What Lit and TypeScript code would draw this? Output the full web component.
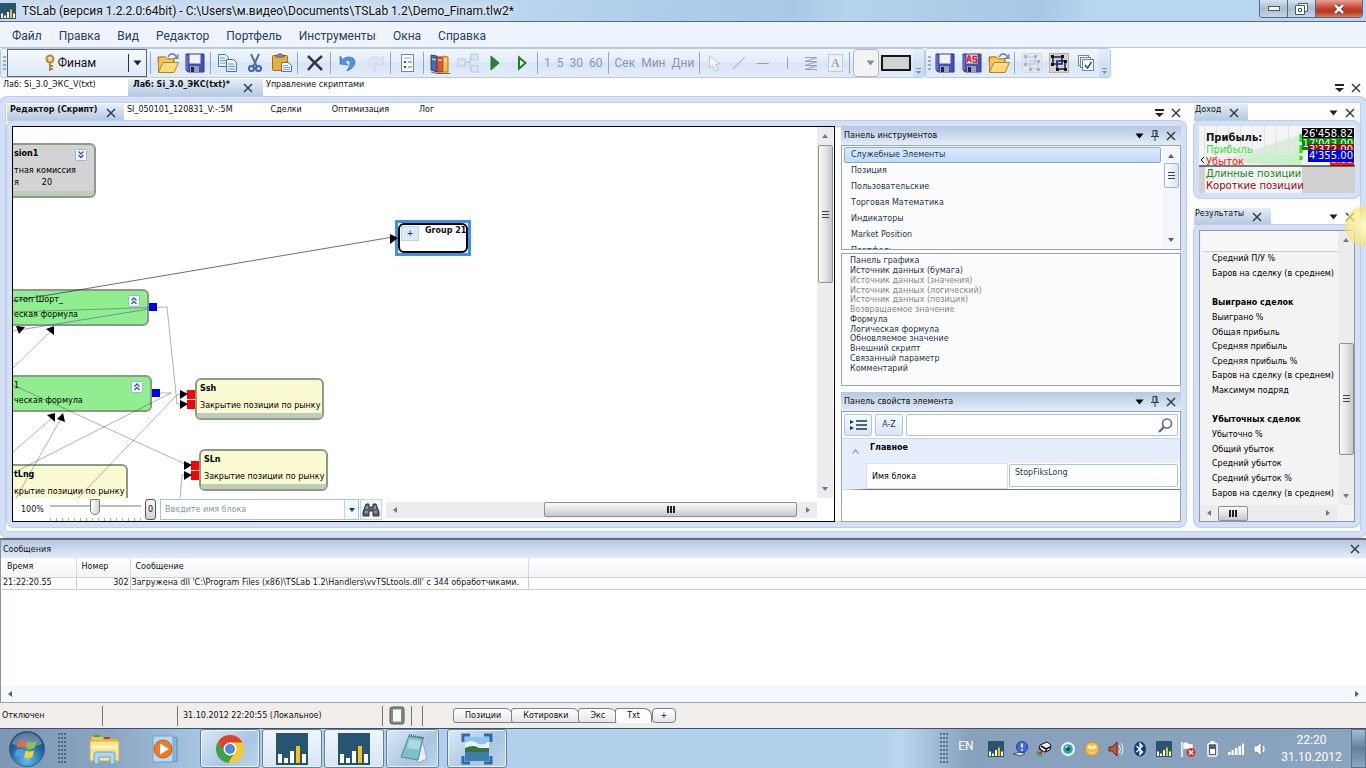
import { LitElement, html, css, svg } from "lit";
import { customElement } from "lit/decorators.js";
import { classMap } from "lit/directives/class-map.js";
import { styleMap } from "lit/directives/style-map.js";

const pic = (w: number, h: number, body: unknown) =>
  html`<svg width=${w} height=${h} viewBox="0 0 ${w} ${h}" aria-hidden="true">${body}</svg>`;

const folder = () => pic(22, 22, svg`
  <path d="M1 5h7l2 2h7v3H1z" fill="#e2a52e" stroke="#a5741d"/>
  <path d="M1.500 20V6l3-1h4l2 2h6v4" fill="#f4c65b" stroke="#b58125"/>
  <path d="M1.500 20.500L6 10.500h15.500L17 20.500z" fill="#fbd873" stroke="#b58125"/>
  <path d="M4 19l3-7h12" fill="none" stroke="#fff0b8"/>
  <path d="M11 5c2-4 6-4 8-1" fill="none" stroke="#6a89b8" stroke-width="1.600"/><path d="M21.500 1.500V7H16z" fill="#6a89b8"/>`);
const disk = (label = false) => pic(20, 20, svg`
  <path d="M1 1h18v18H3l-2-2z" fill="#4850ae" stroke="#33398c"/>
  <rect x="4.500" y="1.500" width="11" height="9" fill=${label ? "#f6d7dc" : "#f1f4ff"}/>
  <rect x="5" y="13" width="9" height="6" fill="#9aa0b4"/><rect x="6" y="14" width="3" height="5" fill="#20244f"/>
  <path d="M2 2v15" stroke="#8087d8"/>
  ${label ? svg`<path d="M5 9l1.500-6h1L9 9M5.500 7h3M15 3.500h-4v2.500h3.500V9H10.500" fill="none" stroke="#d32030" stroke-width="1.500"/>` : ""}`);
const key = () => pic(12, 18, svg`<circle cx="6" cy="5" r="3.500" fill="#f3cf86" stroke="#b8873a" stroke-width="2"/><path d="M6 9v8M6 12h3M6 15h3" stroke="#b8873a" stroke-width="2"/><circle cx="6" cy="4" r="1" fill="#fff"/>`);
const copy = () => pic(21, 20, svg`<g fill="#eaf3ff" stroke="#4c72b0"><path d="M1.500 1.500h7l3 3v9h-10z"/><path d="M9.500 6.500h7l3 3v9h-10z"/></g><path d="M3 5h5M3 7.500h6M3 10h6M11 11h6M11 13.500h7M11 16h7" stroke="#6f94cc"/>`);
const cut = () => pic(14, 20, svg`<path d="M3 1l5.500 12M11 1L5.500 13" stroke="#5a6f92" stroke-width="2"/><circle cx="3.500" cy="15.500" r="2.500" fill="none" stroke="#3c62b8" stroke-width="2"/><circle cx="10.500" cy="15.500" r="2.500" fill="none" stroke="#3c62b8" stroke-width="2"/>`);
const paste = () => pic(22, 20, svg`<rect x="1.500" y="2.500" width="15" height="15" rx="1" fill="#e9b13c" stroke="#a56d1a"/><path d="M5 4V2h2.500c0-2 3-2 3 0H13v2z" fill="#8a93a5" stroke="#59606e"/><path d="M10.500 9.500h7l3 3v6h-10z" fill="#f3f7fd" stroke="#5f6f88"/><path d="M12 12.500h5M12 14.500h7M12 16.500h7" stroke="#8ea3c1"/>`);
const cross = () => pic(18, 18, svg`<path d="M2 2c4 4 8 8 14 14M16 2C11 6 6 11 2 16" fill="none" stroke="#2e3742" stroke-width="2.500"/>`);
const undo = () => pic(18, 17, svg`<path d="M1 1v8l8 1-2.500-3C9 4 13 6 10 12l-2 4C16 13 18 6 14 3 10 1 6 2 4 4.500z" fill="#5590e0" stroke="#2e64b4" stroke-width=".6"/>`);
const redo = () => pic(18, 17, svg`<path d="M17 1v8l-8 1 2.500-3C9 4 5 6 8 12l2 4C2 13 0 6 4 3c4-2 8-1 10 1.500z" fill="#dde7f4" stroke="#bfcfe5" stroke-width=".7"/>`);
const sheet = () => pic(15, 20, svg`<rect x="1.500" y="1.500" width="12" height="17" fill="#fafcff" stroke="#7b8899"/><path d="M4 5h7" stroke="#9aa7b8"/><path d="M4 8h2v2H4zM4 13h2v2H4z" fill="#404b5c"/><path d="M8 9h4M8 14h4" stroke="#5f6c80"/>`);
const books = () => pic(23, 21, svg`<path d="M2 2l6 1v16l-6-2z" fill="#4470b0" stroke="#27467e"/><path d="M8 4h6v15H8z" fill="#e0503c" stroke="#942c20"/><path d="M14 3l5 1v15h-5z" fill="#f3c14c" stroke="#a97a1b"/><path d="M3 6l4 1M9 7h4M15 7h3" stroke="#fff"/><path d="M2 19l6 1.500h13" stroke="#8a5e28" fill="none"/>`);
const tree = () => pic(22, 20, svg`<g fill="#dde7f4" stroke="#b7c8df"><path d="M7 9h6V4h2M7 9h6v7h2" fill="none"/><rect x="1" y="6" width="7" height="7"/><rect x="14" y="1" width="7" height="6"/><rect x="14" y="13" width="7" height="6"/></g>`);
const play = (solid: boolean) => pic(10, 16, svg`<path d=${solid ? "M1 1v14l8-7z" : "M2 2.500v11L8.500 8z"} fill=${solid ? "#1f8a2a" : "#f2faf2"} stroke="#217a2a" stroke-width=${solid ? 1 : 2}/>`);
const cursor = () => pic(14, 18, svg`<path d="M1.500 1.500v12.500l3-3 2.500 6 3-1-2.500-6H12z" fill="#f4f6fa" stroke="#bcc5d2"/>`);
const stroke = (d: string) => pic(14, 14, svg`<path d=${d} fill="none" stroke="#96a0ae"/>`);
const fib = () => pic(14, 16, svg`<path d="M1 2.500h12M1 6.500h12M1 10.500h12M1 14.500h12M13 2.500L1 6.500M13 6.500L1 10.500M13 10.500L1 14.500" stroke="#96a0ae" fill="none"/>`);
const letterBox = () => html`<span class="letter">A</span>`;
const groupIcon = (on: boolean) => pic(20, 20, svg`
  <rect x=".5" y=".5" width="19" height="19" fill=${on ? "#d5d2cb" : "#e4e9f0"} stroke=${on ? "#b5b2aa" : "#d2dae5"}/>
  <g fill="none" stroke=${on ? "#141a6a" : "#b9c3d3"} stroke-width=${on ? 1.5 : 1}><rect x="4" y="4" width="9" height="7"/><rect x="8" y="8" width="8" height="8"/></g>
  <path d="M2 2h3v3H2zM12 2h3v3h-3zM2 10h3v3H2zM7 15h3v3H7zM15 15h3v3h-3zM15 7h3v3h-3z" fill=${on ? "#101010" : "#aab4c3"}/>`);
const checks = () => pic(18, 18, svg`<g fill="#f8fbff" stroke="#6c84a8"><rect x="1.500" y="1.500" width="10" height="10"/><rect x="3.500" y="3.500" width="10" height="10"/><rect x="5.500" y="5.500" width="11" height="11"/></g><path d="M8 11l2.500 3 4-6" fill="none" stroke="#2a4f8c" stroke-width="1.500"/>`);

const xMark = (s = 10) => pic(s, s, svg`<path d="M1 1L${s - 1} ${s - 1}M${s - 1} 1L1 ${s - 1}" stroke="#333c48" stroke-width="1.500"/>`);
const caretDown = (c = "#222") => pic(9, 6, svg`<path d="M.5 .5h8L4.500 5.500z" fill=${c}/>`);
const overflowMark = () => pic(9, 8, svg`<path d="M0 1h9" stroke="#222" stroke-width="2"/><path d="M0 4h9L4.500 8z" fill="#222"/>`);
const pin = () => pic(8, 11, svg`<path d="M2 .5h4v6H2zM0 6.500h8M4 7v4" fill="none" stroke="#2b3848"/><path d="M5 1v6" stroke="#2b3848"/>`);
const arrow = (dir: "up" | "down" | "left" | "right", c = "#6e7785") => {
  const d = { up: "M1 6l3-4 3 4z", down: "M1 2h6L4 6z", left: "M6 1v6L2 4z", right: "M2 1v6l4-3z" }[dir];
  return pic(8, 8, svg`<path d=${d} fill=${c}/>`);
};
const chev = (down: boolean) => pic(12, 12, svg`<rect x=".5" y=".5" width="11" height="11" rx="1" fill="#f4f8ff" stroke="#9fb4d0"/>
  <path d=${down ? "M3.500 2.500L6 5l2.500-2.500M3.500 6L6 8.500 8.500 6" : "M3.500 5.500L6 3l2.500 2.500M3.500 9L6 6.500 8.500 9"} fill="none" stroke="#3b568c" stroke-width="1.300"/>`);
const binoculars = () => pic(18, 16, svg`<path d="M4 2h3v3h4V2h3l3 8v4h-6V9H7v5H1v-4z" fill="#5b6068" stroke="#34383f"/><path d="M3 10h3M12 10h3M5 4v3M13 4v3" stroke="#c8ccd2"/>`);
const lens = () => pic(15, 15, svg`<circle cx="9" cy="5.500" r="4.500" fill="#fff" stroke="#5d6f86" stroke-width="1.600"/><path d="M6 9l-5 5" stroke="#5d6f86" stroke-width="2.400"/>`);
const listMark = () => pic(18, 12, svg`<path d="M1 1l4 2-4 2zM1 7l4 2-4 2z" fill="#26344a"/><path d="M7 2h11M7 6h11M7 10h11" stroke="#26344a" stroke-width="1.300"/>`);

const tslab = (s: number) => html`<svg width=${s} height=${s} viewBox="0 0 32 32" aria-hidden="true">
  <rect width="32" height="32" fill="#27546f"/><path d="M2 21h4v9H2zM8 25h4v5H8zM14 18h4v12h-4zM26 21h4v9h-4z" fill="#fff"/><path d="M20 13h4v17h-4z" fill="#f4c21c"/></svg>`;

const big = (body: unknown) => html`<svg width="32" height="32" viewBox="0 0 32 32" aria-hidden="true">${body}</svg>`;
const explorer = () => big(svg`<path d="M2 3h11l2 3h14v21H2z" fill="#e9c65d" stroke="#c39c37"/><path d="M5 2h6v2H5z" fill="#37a43c"/><path d="M15 4h6v2h-6z" fill="#c53b2c"/><path d="M1 8h29v20H1z" fill="#f9e48f" stroke="#d1ae4c"/><path d="M2 14h27" stroke="#fff3b9" stroke-width="3"/><path d="M5 31V21q0-2 2-2h17q2 0 2 2v10h-5v-7H10v7z" fill="#a8d7f2" stroke="#5fa3cb"/>`);
const media = () => big(svg`<path d="M14 3l13 2v23l-13 1z" fill="#86b9df" stroke="#5289b9"/><path d="M3 3h20v26H3z" fill="#b7daf2" stroke="#6ba4cf"/><circle cx="13" cy="16" r="9" fill="#ee7b22" stroke="#cf5c10"/><path d="M10 10.500v11l9-5.500z" fill="#fff"/>`);
const chrome = () => big(svg`<circle cx="16" cy="16" r="14" fill="#f6cb2d"/><path d="M4 9A14 14 0 0 1 28.500 9.500H16L9.500 19z" fill="#dd4132"/><path d="M3.800 9A14 14 0 0 0 14 29.900L20.500 20 10 18z" fill="#3fa14b"/><circle cx="16" cy="16" r="6.500" fill="#fff"/><circle cx="16" cy="16" r="5" fill="#4a8ad6"/>`);
const notepad = () => big(svg`<path d="M25 6l5 20-9 4-2-5z" fill="#e8edf1" stroke="#99a5ae"/><path d="M12 3l14 2-5 22-17-3z" fill="#7fc0c9" stroke="#4d8a94"/><path d="M12 6l12 2-2 9-12-2z" fill="#a9dae0"/><path d="M12 2l15 3" stroke="#566" stroke-width="2" stroke-dasharray="1 1"/>`);
const photo = () => big(svg`<rect x="4" y="4" width="24" height="24" fill="#8cc3ef"/><path d="M4 10q7-4 12 0t12-2v8H4z" fill="#e6f2fb"/><path d="M4 15q9-4 14 0h10v4H4z" fill="#3f7039"/><path d="M4 19h24v9H4z" fill="#3c7fae"/><path d="M2 9V2h7M23 2h7v7M30 23v7h-7M9 30H2v-7" fill="none" stroke="#2b6ab0" stroke-width="3"/>`);
const orb = () => html`<svg width="38" height="38" viewBox="0 0 38 38" aria-hidden="true">
  <defs><radialGradient id="orb" cx=".5" cy=".8" r=".8"><stop offset="0" stop-color="#5fc3ee"/><stop offset=".6" stop-color="#23669f"/><stop offset="1" stop-color="#16385f"/></radialGradient></defs>
  <circle cx="19" cy="19" r="17.500" fill="url(#orb)" stroke="#3e5d7c"/><path d="M4 14A15.500 15.500 0 0 1 34 14Q19 20 4 14z" fill="#fff" opacity=".3"/>
  <path d="M10 12q4-3 8-1l-1.500 7q-4-2-8 0z" fill="#ec6a36"/><path d="M19.500 11.500q4 2 9 0L26.500 18q-4 2-8.500.5z" fill="#8cc63e"/>
  <path d="M8 20q4-2 8 0l-1.500 7q-4-2-8 0z" fill="#47a0e2"/><path d="M17.500 20.500q4 2 8.500 0L24.500 27q-4 2-8.500.5z" fill="#f8cd3b"/></svg>`;

const tray = [
  { n: "TSLab", i: () => tslab(16) },
  { n: "Сообщение", i: () => pic(16, 16, svg`<path d="M1 13l6-2 6 1-4 3z" fill="#d8dde4" stroke="#46526a"/><circle cx="10" cy="6" r="5.500" fill="#3e6ce0" stroke="#1c3c9a"/><path d="M10 2.500v4M10 8v1.500" stroke="#fff" stroke-width="1.800"/>`) },
  { n: "Устройство", i: () => pic(16, 16, svg`<path d="M4 4l7-3 4 3-1 5-5 2-6-3z" fill="#f3f3f3" stroke="#111"/><path d="M5 5l5 3v3M10 8l4-2" stroke="#111" fill="none" stroke-width="1.500"/><path d="M4 7l2 4-5 3" stroke="#111" fill="none"/><path d="M1 11l5 2" stroke="#e23b3b" stroke-width="2"/><path d="M1 13l5 2" stroke="#36b54a" stroke-width="2"/>`) },
  { n: "Агент", i: () => pic(16, 16, svg`<circle cx="8" cy="8" r="7.500" fill="#e6f4f6" stroke="#8ca4ae"/><circle cx="8" cy="8" r="4.800" fill="#2aa3b8"/><circle cx="8" cy="8" r="2" fill="#0d4c62"/><circle cx="6.500" cy="6" r="1" fill="#fff"/>`) },
  { n: "Монета", i: () => pic(16, 16, svg`<circle cx="8" cy="8" r="7" fill="#f3b945" stroke="#d08c22"/><path d="M3 6q4-4 5 0 3-4 5 0-2 3-5 2-3 1-5-2z" fill="#fff0bf"/><path d="M5 11q3 2 6 0" stroke="#fff0bf" fill="none"/>`) },
  { n: "Динамик", i: () => pic(16, 16, svg`<path d="M1 6h3l5-5v14l-5-5H1z" fill="#c4553c" stroke="#6e2517"/><path d="M11 4q3 4 0 8M13 2q4 6 0 12" fill="none" stroke="#e9eef4"/>`) },
  { n: "Bluetooth", i: () => pic(16, 16, svg`<ellipse cx="8" cy="8" rx="6" ry="7.500" fill="#123e78"/><path d="M4.500 5l6 6L8 13.500v-11L10.500 5l-6 6" fill="none" stroke="#fff" stroke-width="1.300"/>`) },
  { n: "TSLab 2", i: () => tslab(16) },
  { n: "Центр поддержки", i: () => pic(16, 16, svg`<path d="M2 1v15" stroke="#fff" stroke-width="1.500"/><path d="M3 2q3-2 5 0t5 0v7q-3 2-5 0T3 9z" fill="#fff" stroke="#75808e" stroke-width=".5"/><circle cx="11" cy="11.500" r="4.500" fill="#d8362c"/><path d="M9 9.500l4 4M13 9.500l-4 4" stroke="#fff" stroke-width="1.500"/>`) },
  { n: "Батарея", i: () => pic(16, 16, svg`<rect x="4" y="2.500" width="9" height="12.500" rx="1.500" fill="#51606f" stroke="#fff" stroke-width="1.500"/><path d="M6.500 1h4" stroke="#fff" stroke-width="2"/><path d="M6 8h5v5H6z" fill="#fff"/>`) },
  { n: "Сеть", i: () => pic(16, 16, svg`<path d="M0 11h2.500v3H0zM3.500 9H6v5H3.500zM7 7h2.500v7H7zM10.500 5H13v9h-2.500zM14 2.500h2V14h-2z" fill="#fff"/>`) },
  { n: "Громкость", i: () => pic(16, 16, svg`<path d="M2 5h3l4-4v14l-4-4H2z" fill="#fff" stroke="#5d6b7a" stroke-width=".6"/><path d="M11 5q2 3 0 6" fill="none" stroke="#fff" stroke-width="1.300"/>`) },
];

const categories = ["Служебные Элементы", "Позиция", "Пользовательские", "Торговая Математика", "Индикаторы", "Market Position", "Портфель"];
const elements: [string, boolean][] = [
  ["Панель графика", true], ["Источник данных (бумага)", true], ["Источник данных (значения)", false],
  ["Источник данных (логический)", false], ["Источник данных (позиция)", false], ["Возвращаемое значение", false],
  ["Формула", true], ["Логическая формула", true], ["Обновляемое значение", true], ["Внешний скрипт", true],
  ["Связанный параметр", true], ["Комментарий", true],
];
const results = ["Средний П/У %", "Баров на сделку (в среднем)", "", "#Выиграно сделок", "Выиграно %", "Общая прибыль",
  "Средняя прибыль", "Средняя прибыль %", "Баров на сделку (в среднем)", "Максимум подряд", "", "#Убыточных сделок",
  "Убыточно %", "Общий убыток", "Средний убыток", "Средний убыток %", "Баров на сделку (в среднем)"];

interface Block { kind: string; x: number; y: number; w: number; h: number; title: string; text: string; icon?: string; cut?: boolean; extra?: [string, string]; plain?: boolean; }
const blocks: Block[] = [
  { kind: "grey", x: -8, y: 16, w: 91, h: 55, title: "sion1", text: "тная комиссия", extra: ["я", "20"], icon: "down", cut: true },
  { kind: "green", x: -8, y: 162, w: 144, h: 37, title: "стоп Шорт_", text: "еская формула", icon: "up", cut: true, plain: true },
  { kind: "green", x: -8, y: 248, w: 147, h: 37, title: "1", text: "ческая формула", icon: "up", cut: true, plain: true },
  { kind: "yellow", x: -8, y: 337, w: 123, h: 42, title: "tLng", text: "крытие позиции по рынку", cut: true },
  { kind: "yellow", x: 182, y: 251, w: 129, h: 42, title: "Ssh", text: "Закрытие позиции по рынку" },
  { kind: "yellow", x: 186, y: 322, w: 129, h: 42, title: "SLn", text: "Закрытие позиции по рынку" },
];

@customElement("app-root")
export class AppRoot extends LitElement {
  static styles = css`
    :host { display: block; font: 8px/10px "DejaVu Sans", sans-serif; color: #111; background: #fff; }
    * { box-sizing: border-box; }
    button, input, select { font: inherit; color: inherit; margin: 0; }
    button { border: 0; padding: 0; background: none; display: inline-flex; align-items: center; justify-content: center; flex: none; white-space: nowrap; }
    svg { display: block; flex: none; }
    .app { display: flex; flex-direction: column; height: 100vh; min-height: 600px; overflow: hidden; }
    .ui { font-family: Roboto, "Noto Sans", sans-serif; font-size: 12px; line-height: 16px; }

    .title { flex: none; height: 22px; display: flex; align-items: center; border-bottom: 1px solid #566b84;
      background: linear-gradient(100deg, #c5daee 0 30%, #b2d0ec 45%, #a9c8e6 58%, #b6d3ed 62%, #a8c7e5 76%, #b9d6f0 80% 100%); }
    .title .name { flex: 1; padding-left: 6px; color: #111; text-shadow: 0 0 6px #fff, 0 0 8px #fff; font-weight: 400; margin: 0; white-space: nowrap; }
    .winbtns { display: flex; align-self: flex-start; height: 18px; margin-right: 3px; border: 1px solid #586a80; border-top: 0; border-radius: 0 0 4px 4px; overflow: hidden; }
    .winbtns button { width: 28px; background: linear-gradient(#d7e3ef, #a9bdd2 50%, #c3d5e7); border-right: 1px solid #586a80; }
    .winbtns .close { width: 46px; border: 0; background: linear-gradient(#e7a294, #c8402a 50%, #b63820 70%, #de7b5c); }

    .menu { flex: none; height: 26px; display: flex; gap: 17px; align-items: center; padding: 0 12px; background: #eff3fb; border-bottom: 1px solid #b8c9df; color: #24405e; }
    .menu button { height: 20px; padding-top: 2px; }

    .bars { flex: none; display: flex; height: 30px; }
    .bar { display: flex; align-items: center; height: 30px; border: 1px solid #b6cbe6; border-radius: 3px; background: linear-gradient(#f2f7fd, #e3ecf8 45%, #d9e5f5 50%, #e4edf9); padding-left: 2px; }
    .bar button { width: 27px; height: 26px; }
    .bar .narrow { width: 24px; }
    .sep { flex: none; width: 1px; height: 22px; margin: 0 3px 0 2px; background: #98a8bc; }
    .grip { flex: none; width: 3px; height: 14px; background: repeating-linear-gradient(#9aabc2 0 2px, transparent 2px 4px); }
    .bar .account { display: flex; width: 140px; height: 28px; border: 1px solid #5d6570; color: #111; margin: 0 1px; background: linear-gradient(#f5f9fe, #dfe9f6); }
    .account .face { flex: 1; display: flex; align-items: center; justify-content: center; gap: 2px; padding-left: 4px; }
    .account .drop { width: 18px; height: 18px; border-left: 1px solid #333; align-self: center; display: flex; align-items: center; justify-content: center; }
    .bar .txt { width: auto; padding: 0 3px; color: #8b97a8; }
    .bar .ddl { width: 26px; height: 28px; border: 1px solid #b3b8c0; border-radius: 4px; background: #f3f3f3; padding-left: 8px; }
    .bar .swatch { width: 30px; height: 16px; border: 2px solid #14161a; background: #d2d2d2; margin: 0 2px; }
    .bar .over { width: 11px; height: 28px; background: linear-gradient(#e2edfa, #c3d8f1); align-items: flex-end; padding-bottom: 3px; opacity: .8; }
    .letter { font: bold 12px/16px "Liberation Serif", serif; border: 1px solid #c2cad6; width: 15px; color: #9ba4b2; background: #edf1f6; }

    .tabs { flex: none; display: flex; align-items: flex-start; height: 19px; padding-top: 1px; }
    .tabs.inner { padding-top: 2px; }
    .tab { height: 100%; align-items: flex-start; justify-content: flex-start; padding: 1px 3px 0; }
    .tab.on { background: linear-gradient(#e4edf7, #b3c9e0); gap: 9px; font-weight: 700; }
    .tab.on svg { margin-top: 3px; }
    .tab.wide { padding-left: 15px; padding-right: 15px; }
    .tab.lead { padding-right: 23px; }
    .tab.doc { min-width: 128px; }
    .tab.doc.on { min-width: 135px; padding-left: 5px; gap: 13px; }
    .tab.first { min-width: 117px; }
    .tab.slim { font-weight: 400; gap: 8px; padding-left: 1px; padding-right: 9px; }
    .tabs .fill { flex: 1; }
    .tools { display: flex; gap: 7px; align-items: center; align-self: center; padding-right: 5px; }

    .frame { border: 5px solid #d3e0f6; border-radius: 7px; box-shadow: inset 0 0 0 1px #c0d0ea, 0 0 0 1px #bccde8; background: #fff; min-width: 0; min-height: 0; }
    .outer { flex: 1 1 0; display: flex; gap: 8px; padding: 0 1px 5px 2px; }
    .work { flex: 1; min-width: 0; display: flex; flex-direction: column; }
    .work > .frame { flex: 1; display: flex; gap: 6px; }
    .right { flex: none; width: 166px; display: flex; flex-direction: column; }

    .editor { flex: 1; min-width: 0; border: 1px solid #000; display: flex; flex-direction: column; }
    .stage { flex: 1; min-height: 0; display: flex; }
    .canvas { flex: 1; position: relative; overflow: hidden; }
    .wires { position: absolute; inset: 0; pointer-events: none; }
    .block { position: absolute; border: 2px solid #8b9c84; border-radius: 6px; overflow: hidden; white-space: nowrap; padding: 4px 3px 0; color: #000; }
    .block.cut { padding-left: 7px; }
    .block h3 { margin: 0 0 7px; font-size: 8px; line-height: 10px; height: 10px; }
    .block.plain h3 { font-weight: 400; margin-bottom: 5px; }
    .block p { margin: 0 0 2px; display: flex; gap: 23px; }
    .grey { background: #d3d3d3; } .green { background: #90ee90; } .yellow { background: #fafad2; }
    .grey::after, .yellow::after { content: ""; position: absolute; left: 0; right: 0; bottom: 0; height: 5px; background: #c1cbbd; }
    .block .exp { position: absolute; right: 7px; top: 4px; }
    .group { position: absolute; left: 382px; top: 93px; width: 76px; height: 36px; border: 3px solid #3c92e8; background: #fff; }
    .group .in { height: 100%; border: 2px solid #000; border-radius: 6px; display: flex; gap: 6px; padding: 1px; overflow: hidden; font-weight: 700; white-space: nowrap; }
    .group button { width: 18px; height: 15px; background: #dce9f8; border: 1px solid #c0d2e8; font-weight: 400; }

    .sb { flex: none; background: #ececee; display: flex; align-items: center; justify-content: space-between; }
    .sb.v { width: 16px; flex-direction: column; padding: 5px 0; }
    .sb.h { height: 16px; padding: 0 5px; }
    .thumb { border: 1px solid #8e9196; border-radius: 2px; display: flex; align-items: center; justify-content: center; }
    .v .thumb { width: 15px; background: linear-gradient(90deg, #fafafa, #e2e3e6 50%, #c5c7cb); }
    .h .thumb { height: 15px; background: linear-gradient(#fafafa, #e2e3e6 50%, #c5c7cb); }
    .v .thumb::after { content: ""; width: 7px; height: 7px; background: repeating-linear-gradient(#444 0 1px, transparent 1px 3px); }
    .h .thumb::after { content: ""; width: 8px; height: 7px; background: repeating-linear-gradient(90deg, #222 0 2px, transparent 2px 3px); }
    .stage .sb { margin-right: 1px; }
    .stage .thumb { height: 138px; margin-bottom: auto; margin-top: 5px; }
    .foot { flex: none; height: 23px; display: flex; align-items: center; padding-left: 8px; gap: 4px; }
    .foot .pct { width: 25px; }
    .slider { width: 91px; height: 22px; display: flex; flex-direction: column; justify-content: space-between; }
    .slider input { appearance: none; width: 100%; height: 17px; background: linear-gradient(#b9bcc0, #b9bcc0) center 6px / 100% 2px no-repeat; }
    .slider input::-webkit-slider-thumb { appearance: none; width: 10px; height: 16px; border: 1px solid #777; background: linear-gradient(90deg, #fff, #d0d2d6); border-radius: 1px 1px 5px 5px; }
    .slider i { height: 3px; background: repeating-linear-gradient(90deg, #aaa 0 1px, transparent 1px 6px); }
    .foot .zero { width: 11px; height: 21px; border: 1px solid #555; border-radius: 3px; background: linear-gradient(#f7f7f7, #cfd0d3); }
    .combo { display: flex; width: 199px; height: 21px; border: 1px solid #a9c1df; }
    .combo input { flex: 1; min-width: 0; border: 0; padding: 0 4px; outline: 0; }
    .combo input::placeholder { color: #8b97a5; }
    .combo button { width: 14px; border-left: 1px solid #c3d4e9; background: #f3f8fe; }
    .foot .find { width: 22px; height: 21px; border: 1px solid #c3d4e9; background: #f0f5fc; margin-left: -3px; }
    .foot .sb { flex: 1; margin-right: 17px; }
    .foot .thumb { width: 60%; margin-left: auto; margin-right: 7px; }

    .side { flex: none; width: 340px; display: flex; flex-direction: column; }
    .phead { flex: none; height: 19px; display: flex; align-items: center; justify-content: space-between; padding: 0 5px 0 3px; background: linear-gradient(#b6c8e0, #e3ecfa); }
    .phead h2 { font-size: 8px; font-weight: 400; margin: 0; padding-top: 1px; }
    .phead .tools { padding: 0; }
    .box { border: 1px solid #98a4b4; background: #fcfcfc; color: #24364c; }
    ul { list-style: none; margin: 0; padding: 0; }
    .cats { flex: none; display: flex; height: 105px; padding: 1px 1px 0 2px; overflow: hidden; }
    .cats ul { flex: 1; overflow: hidden; }
    .cats li { height: 16px; line-height: 16px; padding-left: 7px; }
    .cats li.on { line-height: 14px; padding-left: 6px; border: 1px solid #8aa8cd; border-radius: 2px; background: linear-gradient(#dcebfc, #c1dbf8); }
    .cats .sb { background: #f3f7fd; margin-left: 2px; }
    .cats .thumb { height: 25px; border-color: #9fb2cc; background: linear-gradient(90deg, #fdfeff, #d9e5f4); margin-bottom: auto; margin-top: 3px; }
    .elems { flex: none; height: 133px; margin: 3px 0 6px; padding: 2px 8px 12px; line-height: 9px; }
    .elems ul, .res ul { display: grid; grid-auto-rows: 1fr; height: 100%; align-items: center; }
    .off { color: #858585; }
    .props { flex: 1; background: #fff; display: flex; flex-direction: column; min-height: 0; }
    .ptool { flex: none; display: flex; gap: 3px; padding: 2px; border-bottom: 1px solid #c7d7ea; }
    .ptool button { width: 28px; height: 22px; border: 1px solid #b3c6de; border-radius: 2px; background: linear-gradient(#f5f9fe, #d8e5f5); }
    .search { flex: 1; display: flex; align-items: center; border: 1px solid #a9c3e2; border-radius: 2px; padding-right: 4px; background: #fff; }
    .search input { flex: 1; border: 0; outline: 0; min-width: 0; background: none; }
    .cat { flex: none; display: flex; align-items: flex-start; height: 24px; background: #e7eefb; color: #000; font-weight: 700; padding-top: 4px; gap: 11px; }
    .cat svg { margin: 6px 0 0 10px; }
    .prow { flex: none; display: grid; grid-template: 26px / 142px 1fr; border-left: 24px solid #e7eefb; border-bottom: 1px solid #6d7684; color: #000; }
    .prow label { padding: 8px 5px; border: 1px solid #d3dff0; }
    .prow input { margin: 1px; width: calc(100% - 3px); height: 23px; border: 1px solid #a9c3e2; border-radius: 2px; padding: 0 5px 6px; min-width: 0; color: #24364c; }

    .chart { position: relative; height: 67px; background: #f4f4f4; overflow: hidden; font-size: 10px; line-height: 12px; }
    .chart svg { position: absolute; inset: 0; }
    .legend { position: absolute; left: 7px; top: 6px; white-space: nowrap; }
    .legend div { height: 12px; }
    .legend .b { font-weight: 700; } .legend .g { color: #2be32b; } .legend .r { color: #f01818; }
    .legend .dg { color: #128a12; } .legend .dr { color: #8c1010; }
    .val { position: absolute; right: 1px; color: #fff; padding: 0 1px; white-space: nowrap; }
    .v1 { top: 2px; background: #000; } .v2 { top: 12px; background: #058a05; } .v3 { top: 18px; background: #930f0f; }
    .v5 { top: 28px; background: #f01818; } .v4 { top: 24px; background: #0000f0; }
    .rframe { margin-bottom: 8px; flex: none; }
    .rframe.grow { flex: 1; margin: 0; }
    .res { height: 100%; border: 1px solid #8f98a6; background: #f3f3f3; display: flex; flex-direction: column; }
    .res .top { flex: 1; min-height: 0; display: flex; }
    .res .list { flex: 1; display: flex; flex-direction: column; padding-left: 3px; min-width: 0; }
    .res .list::before { content: ""; flex: none; height: 20px; border-bottom: 1px solid #ccc; background: #f8f8f8; }
    .res ul { flex: 1; padding: 0 0 4px 9px; white-space: nowrap; color: #000; }
    .res .top .thumb { height: 112px; margin-top: 61px; }
    .res .sb.h { margin-right: 17px; }
    .res .sb.h .thumb { width: 30px; margin-right: auto; margin-left: 5px; }
    .glow { position: absolute; right: 0; top: 206px; width: 21px; height: 40px; overflow: hidden; pointer-events: none; }
    .glow::before { content: ""; display: block; width: 40px; height: 40px; border-radius: 50%; background: radial-gradient(rgba(255,250,190,.95), rgba(250,226,110,.7) 70%, rgba(240,210,90,.4)); }

    .msgs { flex: none; height: 165px; border-top: 2px solid #6a6e74; border-left: 1px solid #8a93a0; display: flex; flex-direction: column; margin-top: 1px; border-bottom: 1px solid #9aa4b2; }
    .msgs .phead { padding: 0 6px 0 2px; height: 18px; }
    table { border-collapse: collapse; width: 100%; table-layout: fixed; margin-left: 1px; }
    th { font-weight: 400; text-align: left; height: 19px; padding: 0 5px; border-right: 1px solid #d8dade; border-bottom: 1px solid #cfd2d6; background: linear-gradient(#fff, #f2f4f7); }
    td { height: 12px; padding: 0 1px; border-right: 1px solid #ccc; border-bottom: 1px solid #ccc; white-space: nowrap; }
    td.num { text-align: right; }
    .c1 { width: 74px; } .c2 { width: 54px; } .c3 { width: 398px; }
    .msgs .sb { margin-top: auto; background: #f4f8fe; }

    .status { flex: none; height: 25px; display: flex; align-items: center; background: #f0edeb; }
    .status .cell { height: 20px; padding: 5px 2px; border-right: 1px solid #777; }
    .s1 { width: 103px; } .s2 { width: 75px; } .s3 { width: 205px; }
    .status .s3 { padding-left: 5px; } .status .s4 { width: 29px; padding: 0 0 0 6px; } .s5 { width: 11px; }
    .sheets { display: flex; margin-left: 30px; }
    .sheets button { height: 15px; padding: 0 11px; border: 1px solid #7e8085; border-radius: 3px 8px 0 3px; background: linear-gradient(#fff, #e6e6e8); margin-right: -2px; }
    .sheets .on { background: #fff; border-bottom-color: #fff; }
    .sheets .plus { width: 24px; padding: 0; margin-left: 2px; border-radius: 4px; }

    .taskbar { flex: none; height: 40px; display: flex; align-items: center; border-top: 1px solid #37546c;
      background: linear-gradient(90deg, #7d97b4 0, #8aa5c2 8%, #a9c7e4 15%, #b2cfeb 20% 64%, #bad6f0 66%, #87a0bb 71%, #8aa4c0); }
    .taskbar .orb { margin: 0 11px 0 7px; width: 40px; }
    .dots { flex: none; width: 8px; height: 32px; background: repeating-linear-gradient(90deg, #3a4f66 0 2px, transparent 2px 3px); -webkit-mask: repeating-linear-gradient(#000 0 2px, transparent 2px 4px); opacity: .7; }
    .dots.d1 { margin-right: 8px; }
    .pinned { width: 61px; height: 40px; }
    .run { width: 60px; height: 39px; border: 1px solid #63809f; border-radius: 3px; background: linear-gradient(135deg, #dce9f6, #a9c6e3 60%, #bdd5ec); box-shadow: inset 0 0 0 1px #e9f2fa; margin-right: 2px; }
    .run.g1 { margin-left: 4px; }
    .run.live { background: linear-gradient(#f1f6fb, #d6e5f4); }
    .run.stack { width: 53px; margin-right: 8px; }
    .taskbar .fill { flex: 1; }
    .lang { color: #fff; width: 36px; text-align: center; margin-bottom: 6px; }
    .tray { display: flex; }
    .tray button { width: 24px; height: 30px; }
    .clock { width: 79px; color: #fff; text-align: center; line-height: 17px; }
    .desk { width: 15px; height: 39px; border: 1px solid #55708c; background: linear-gradient(#a4bcd4, #64809e 50%, #8ba6c2); }
  `;

  private block(b: Block) {
    const cls = { block: true, [b.kind]: true, cut: !!b.cut, plain: !!b.plain };
    return html`<div class=${classMap(cls)} style=${styleMap({ left: `${b.x}px`, top: `${b.y}px`, width: `${b.w}px`, height: `${b.h}px` })}>
      <h3>${b.title}</h3><p>${b.text}</p>${b.extra ? html`<p><span>${b.extra[0]}</span><span>${b.extra[1]}</span></p>` : ""}
      ${b.icon ? html`<button class="exp" aria-label="Свернуть">${chev(b.icon === "down")}</button>` : ""}</div>`;
  }

  private wires() {
    const lines = ["M0 174L380 110", "M0 185L154 180", "M154 180L164 277h4", "M0 241L39 203", "M0 258L174 338", "M147 266h11L0 346",
      "M168 267l-4 1L65 371", "M0 325L40 290", "M3 371L49 290", "M167 372l2-24h5"];
    return html`<svg class="wires" width="805" height="372" aria-hidden="true">
      ${lines.map((d, i) => svg`<path d=${d} fill="none" stroke="#222" stroke-opacity=${i ? 0.35 : 0.65}/>`)}
      <path d="M0 204L136 182" stroke="#4a5ac0" stroke-opacity=".6"/>
      <g fill="#0000f0"><rect x="136" y="176" width="8" height="8"/><rect x="139" y="262" width="8" height="8"/></g>
      <g fill="#f00"><rect x="174" y="263" width="8" height="9"/><rect x="174" y="273" width="8" height="9"/><rect x="178" y="334" width="8" height="9"/><rect x="178" y="344" width="8" height="9"/></g>
      <path d="M167 263l8 4-8 5zM167 273l8 4-8 5zM171 334l8 4-8 5zM171 344l8 4-8 5zM377 107l8 4-8 6zM3 199l9 1-6 7zM33 202l8-3v9zM34 288l8-2v9zM44 292l6-6 2 9z" fill="#000"/>
    </svg>`;
  }

  private panelTools() {
    return html`<div class="tools"><button aria-label="Меню панели">${caretDown("#000")}</button><button aria-label="Закрепить">${pin()}</button><button aria-label="Закрыть панель">${xMark()}</button></div>`;
  }

  private toolButton(label: string, icon: unknown, narrow = false) {
    return html`<button class=${classMap({ narrow })} aria-label=${label}>${icon}</button>`;
  }

  render() {
    const t = this.toolButton;
    const sep = html`<span class="sep"></span>`;
    return html`<div class="app">
      <header class="title ui">${tslab(16)}<h1 class="name ui">TSLab (версия 1.2.2.0:64bit) - C:\\Users\\м.видео\\Documents\\TSLab 1.2\\Demo_Finam.tlw2*</h1>
        <div class="winbtns"><button aria-label="Свернуть окно">${pic(12, 5, svg`<rect x=".5" y=".5" width="11" height="4" fill="#fff" stroke="#4b5868"/>`)}</button>
          <button aria-label="Восстановить окно">${pic(13, 12, svg`<g fill="#fff" stroke="#4b5868"><path d="M3.500 .5h9v8h-9z"/><path d="M.5 2.500h9v9h-9z"/><path d="M3.500 5.500h3v3h-3z"/></g>`)}</button>
          <button class="close" aria-label="Закрыть окно">${pic(12, 10, svg`<path d="M2 1l8 8M10 1L2 9" stroke="#5a2a24" stroke-width="4"/><path d="M2 1l8 8M10 1L2 9" stroke="#fff" stroke-width="2.500"/>`)}</button></div></header>
      <nav class="menu ui">${["Файл", "Правка", "Вид", "Редактор", "Портфель", "Инструменты", "Окна", "Справка"].map((m) => html`<button>${m}</button>`)}</nav>
      <div class="bars ui">
        <div class="bar"><span class="grip"></span>
          <button class="account"><span class="face">${key()} Финам</span><span class="drop">${caretDown()}</span></button>${sep}
          ${t("Открыть", folder())}${t("Сохранить", disk())}${sep}
          ${t("Копировать", copy())}${t("Вырезать", cut())}${t("Вставить", paste())}${sep}${t("Удалить", cross())}${sep}
          ${t("Отменить", undo())}${t("Повторить", redo())}${sep}${t("Свойства", sheet())}${sep}
          ${t("Библиотека", books())}${t("Схема", tree())}${t("Запуск", play(true))}${t("Шаг", play(false))}${sep}
          ${["1", "5", "30", "60"].map((n) => html`<button class="txt">${n}</button>`)}${sep}
          ${["Сек", "Мин", "Дни"].map((n) => html`<button class="txt">${n}</button>`)}${sep}
          ${t("Курсор", cursor(), true)}${t("Линия", stroke("M1 13L13 1"), true)}${t("Горизонталь", stroke("M1 7.500h12"), true)}${t("Вертикаль", stroke("M7.500 1v12"), true)}${t("Уровни", fib(), true)}${t("Надпись", letterBox(), true)}${sep}
          <button class="ddl" aria-label="Толщина">${caretDown("#8c8c8c")}</button><button class="swatch" aria-label="Цвет"></button><button class="over" aria-label="Ещё">${pic(5, 6, svg`<path d="M0 .5h5" stroke="#5f7696"/><path d="M0 3h5L2.500 6z" fill="#5f7696"/>`)}</button></div>
        <div class="bar"><span class="grip"></span>${t("Сохранить скрипт", disk())}${t("Сохранить как", disk(true))}${t("Открыть скрипт", folder())}${sep}
          ${t("Сгруппировать", groupIcon(false))}${t("Разгруппировать", groupIcon(true))}${t("Выбрать все", checks())}<button class="over" aria-label="Ещё">${pic(5, 6, svg`<path d="M0 .5h5" stroke="#5f7696"/><path d="M0 3h5L2.500 6z" fill="#5f7696"/>`)}</button></div>
      </div>
      <div class="tabs"><button class="tab doc">Лаб: Si_3.0_ЭКС_V(txt)</button><button class="tab doc on">Лаб: Si_3.0_ЭКС(txt)* ${xMark()}</button><button class="tab">Управление скриптами</button><span class="fill"></span>
        <div class="tools"><button aria-label="Список окон">${overflowMark()}</button><button aria-label="Закрыть">${xMark()}</button></div></div>

      <main class="frame outer">
        <section class="work">
          <div class="tabs inner"><button class="tab on first">Редактор (Скрипт) ${xMark()}</button><button class="tab lead">SI_050101_120831_V:-:5M</button><button class="tab wide">Сделки</button><button class="tab wide">Оптимизация</button><button class="tab wide">Лог</button><span class="fill"></span>
            <div class="tools"><button aria-label="Список вкладок">${overflowMark()}</button><button aria-label="Закрыть вкладку">${xMark()}</button></div></div>
          <div class="frame">
            <div class="editor">
              <div class="stage"><div class="canvas">${blocks.map((b) => this.block(b))}
                  <div class="group"><div class="in"><button>+</button>Group 21</div></div>${this.wires()}</div>
                <div class="sb v">${arrow("up")}<div class="thumb"></div>${arrow("down")}</div></div>
              <div class="foot"><label class="pct" for="zoom">100%</label><span class="slider"><input id="zoom" type="range" min="0" max="100" value="49"><i></i></span>
                <button class="zero">0</button><span class="combo"><input aria-label="Имя блока для поиска" placeholder="Введите имя блока"><button aria-label="Раскрыть">${pic(6, 4, svg`<path d="M0 0h6L3 4z" fill="#24405e"/>`)}</button></span>
                <button class="find" aria-label="Найти">${binoculars()}</button><div class="sb h">${arrow("left")}<div class="thumb"></div>${arrow("right")}</div></div>
            </div>
            <aside class="side">
              <div class="phead"><h2>Панель инструментов</h2>${this.panelTools()}</div>
              <div class="box cats"><ul>${categories.map((c, i) => html`<li class=${classMap({ on: i === 0 })}>${c}</li>`)}</ul><div class="sb v">${arrow("up", "#4d627e")}<div class="thumb"></div>${arrow("down", "#4d627e")}</div></div>
              <div class="box elems"><ul>${elements.map(([n, on]) => html`<li class=${classMap({ off: !on })}>${n}</li>`)}</ul></div>
              <div class="phead"><h2>Панель свойств элемента</h2>${this.panelTools()}</div>
              <div class="box props"><div class="ptool"><button aria-label="По категориям">${listMark()}</button><button>A-Z</button><div class="search"><input aria-label="Поиск свойства">${lens()}</div></div>
                <div class="cat">${pic(7, 5, svg`<path d="M.5 4.500l3-3.500 3 3.500" fill="none" stroke="#8fa9cc" stroke-width="1.500"/>`)}<span>Главное</span></div>
                <div class="prow"><label for="bname">Имя блока</label><input id="bname" value="StopFiksLong"></div></div>
            </aside>
          </div>
        </section>
        <section class="right">
          <div class="tabs inner"><button class="tab on slim">Доход ${xMark()}</button><span class="fill"></span><div class="tools"><button aria-label="Меню">${caretDown()}</button><button aria-label="Закрыть доход">${xMark()}</button></div></div>
          <div class="frame rframe"><div class="chart">
            <svg width="156" height="67" aria-hidden="true"><path d="M5.500 0v67M17.500 0v67M29.500 0v67M41.500 0v67M53.500 0v67M65.500 0v67M77.500 0v67M89.500 0v67" stroke="#e2e2e2"/>
              <path d="M20 36L60 22 103 8v32z" fill="#d7e8d7" opacity=".8"/><path d="M45 36q20-12 35-8t23-8v20z" fill="#c9f0c9"/><path d="M0 40h104v27H0z" fill="#f4f4f4"/><path d="M0 40h6v27H0zM103 40h53v27h-53z" fill="#d0d0d0"/><path d="M102 8v26" stroke="#1ce01c" stroke-width="3" stroke-dasharray="8 3"/></svg>
            <div class="legend"><div class="b">Прибыль:</div><div class="g">Прибыль</div><div class="r">Убыток</div><div class="dg">Длинные позиции</div><div class="dr">Короткие позиции</div></div>
            <span class="val v1">26'458.82</span><span class="val v2">17'043.00</span><span class="val v3">3'372.00</span><span class="val v5">0.00</span><span class="val v4">4'355.00</span>
            <svg width="156" height="67" aria-hidden="true"><path d="M0 40h156" stroke="#000"/><path d="M5 31l-3 3 3 3" fill="none" stroke="#111"/></svg></div></div>
          <div class="tabs inner"><button class="tab on slim">Результаты ${xMark()}</button><span class="fill"></span><div class="tools"><button aria-label="Меню">${caretDown()}</button><button aria-label="Закрыть результаты">${xMark()}</button></div></div>
          <div class="frame rframe grow"><div class="res"><div class="top"><div class="list"><ul>${results.map((r) => r[0] === "#" ? html`<li><b>${r.slice(1)}</b></li>` : html`<li>${r}</li>`)}</ul></div>
            <div class="sb v">${arrow("up")}<div class="thumb"></div>${arrow("down")}</div></div><div class="sb h">${arrow("left")}<div class="thumb"></div>${arrow("right")}</div></div></div>
        </section>
      </main>
      <div class="glow"></div>

      <section class="msgs"><div class="phead"><h2>Сообщения</h2><button aria-label="Закрыть сообщения">${xMark()}</button></div>
        <table><colgroup><col class="c1"><col class="c2"><col class="c3"><col></colgroup><thead><tr><th>Время</th><th>Номер</th><th>Сообщение</th><th></th></tr></thead>
          <tbody><tr><td>21:22:20.55</td><td class="num">302</td><td>Загружена dll 'C:\\Program Files (x86)\\TSLab 1.2\\Handlers\\vvTSLtools.dll' с 344 обработчиками.</td><td></td></tr></tbody></table>
        <div class="sb h">${arrow("left", "#4d627e")}${arrow("right", "#4d627e")}</div></section>

      <footer class="status"><span class="cell s1">Отключен</span><span class="cell s2"></span><span class="cell s3">31.10.2012 22:20:55 (Локальное)</span><span class="cell s4">${pic(16, 19, svg`<rect x="1" y="1" width="14" height="17" rx="2" fill="#7f8c82" stroke="#555e58"/><rect x="4" y="3.500" width="8" height="12" fill="#f6fbf6"/>`)}</span><span class="cell s5"></span>
        <div class="sheets"><button>Позиции</button><button>Котировки</button><button>Экс</button><button class="on">Txt</button><button class="plus">+</button></div></footer>

      <div class="taskbar ui"><button class="orb" aria-label="Пуск">${orb()}</button><span class="dots d1"></span>
        <button class="pinned" aria-label="Проводник">${explorer()}</button><button class="pinned" aria-label="Проигрыватель">${media()}</button>
        <button class="run g1" aria-label="Chrome">${chrome()}</button><button class="run live" aria-label="TSLab">${tslab(32)}</button><button class="run live" aria-label="TSLab лаборатория">${tslab(32)}</button><button class="run stack" aria-label="Блокнот">${notepad()}</button><button class="run" aria-label="Фото">${photo()}</button>
        <span class="fill"></span><span class="dots"></span><span class="lang">EN</span>
        <div class="tray">${tray.map((x) => html`<button aria-label=${x.n}>${x.i()}</button>`)}</div><time class="clock">22:20<br>31.10.2012</time><button class="desk" aria-label="Свернуть все окна"></button></div>
    </div>`;
  }
}
